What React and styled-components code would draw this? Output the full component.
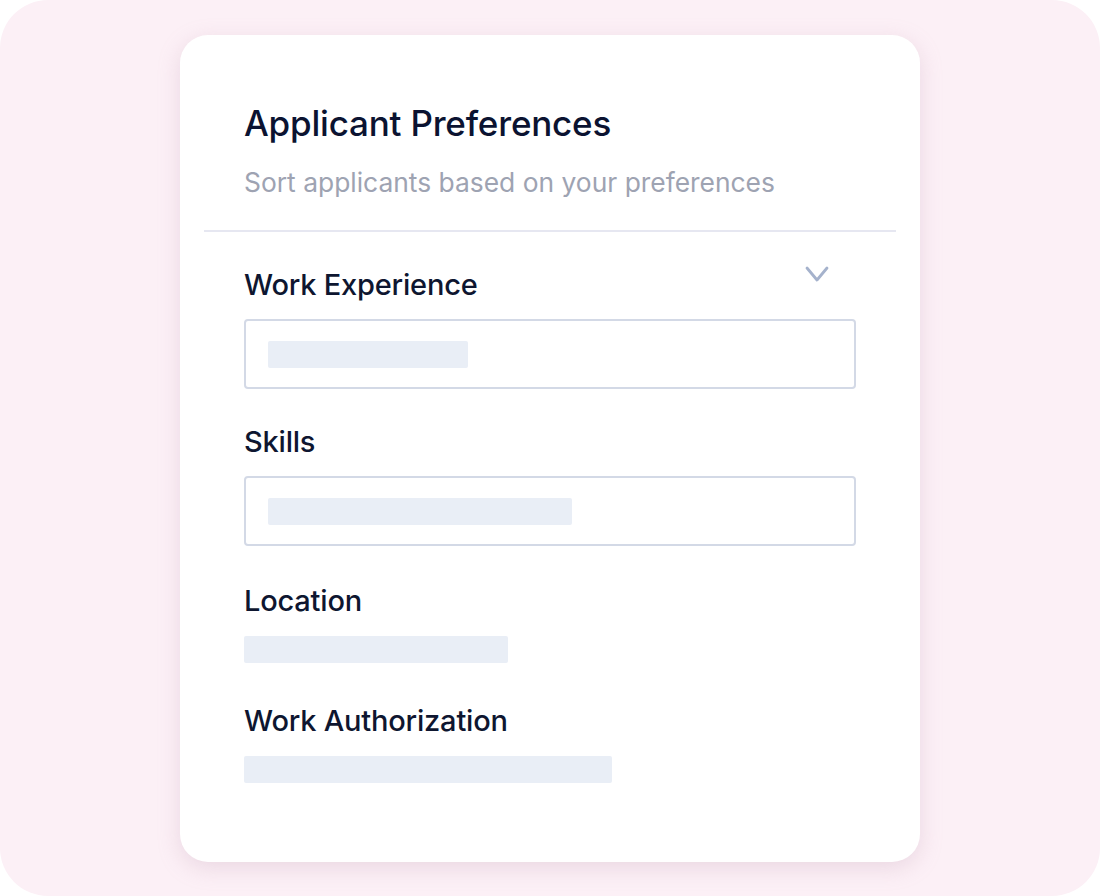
import React from 'react';
import styled, { createGlobalStyle } from 'styled-components';

const GlobalStyle = createGlobalStyle`
    html, body {
        margin: 0;
        background: #ffffff;
        font-family: Inter, "Noto Sans", sans-serif;
    }
`;

const Frame = styled.div`
    width: 1100px;
    height: 896px;
    box-sizing: border-box;
    background: #fcf0f6;
    border-radius: 48px;
    display: flex;
    justify-content: center;
    align-items: flex-start;
    padding-top: 35px;
`;

const Card = styled.div`
    width: 740px;
    height: 827px;
    box-sizing: border-box;
    background: #ffffff;
    border-radius: 28px;
    box-shadow: 0 6px 22px rgba(190, 150, 175, 0.28);
    padding: 0 24px;
`;

const Header = styled.div`
    padding: 67px 40px 32px;
    border-bottom: 2px solid #e6e7f1;
`;

const Title = styled.h1`
    margin: 0;
    font-size: 35px;
    line-height: 42px;
    font-weight: 500;
    color: #0b1331;
    letter-spacing: -0.2px;
`;

const Subtitle = styled.p`
    margin: 22px 0 0;
    font-size: 26.4px;
    line-height: 32px;
    color: #9ea3b2;
`;

const Body = styled.div`
    position: relative;
    padding: 35px 40px 0;
    display: flex;
    flex-direction: column;
`;

const Chevron = styled.svg`
    position: absolute;
    top: 34px;
    right: 67px;
`;

const Field = styled.div`
    display: flex;
    flex-direction: column;
    margin-bottom: ${p => p.$gap}px;
`;

const Label = styled.div`
    font-size: 29px;
    line-height: 36px;
    font-weight: 500;
    color: #0e1630;
    letter-spacing: -0.2px;
`;

const InputBox = styled.div`
    margin-top: 16px;
    height: 70px;
    box-sizing: border-box;
    border: 2px solid #d3d9e6;
    border-radius: 4px;
    padding: 0 22px;
    display: flex;
    align-items: center;
`;

const Placeholder = styled.div`
    width: ${p => p.$w}px;
    height: 27px;
    background: #e9eef6;
    border-radius: 2px;
    margin-top: ${p => (p.$bare ? 17 : 0)}px;
`;

const fields = [
    { label: 'Work Experience', w: 200, boxed: true, gap: 35 },
    { label: 'Skills', w: 304, boxed: true, gap: 37 },
    { label: 'Location', w: 264, boxed: false, gap: 40 },
    { label: 'Work Authorization', w: 368, boxed: false, gap: 0 },
];

const App = () => (
    <>
        <GlobalStyle />
        <Frame>
            <Card>
                <Header>
                    <Title>Applicant Preferences</Title>
                    <Subtitle>Sort applicants based on your preferences</Subtitle>
                </Header>
                <Body>
                    <Chevron width="24" height="16" viewBox="0 0 24 16" fill="none">
                        <path d="M2 2 L12 14 L22 2" stroke="#a5b2cc" strokeWidth="2.8" strokeLinecap="round" strokeLinejoin="round" />
                    </Chevron>
                    {fields.map(f => (
                        <Field key={f.label} $gap={f.gap}>
                            <Label>{f.label}</Label>
                            {f.boxed ? (
                                <InputBox>
                                    <Placeholder $w={f.w} />
                                </InputBox>
                            ) : (
                                <Placeholder $w={f.w} $bare />
                            )}
                        </Field>
                    ))}
                </Body>
            </Card>
        </Frame>
    </>
);

export default App;
